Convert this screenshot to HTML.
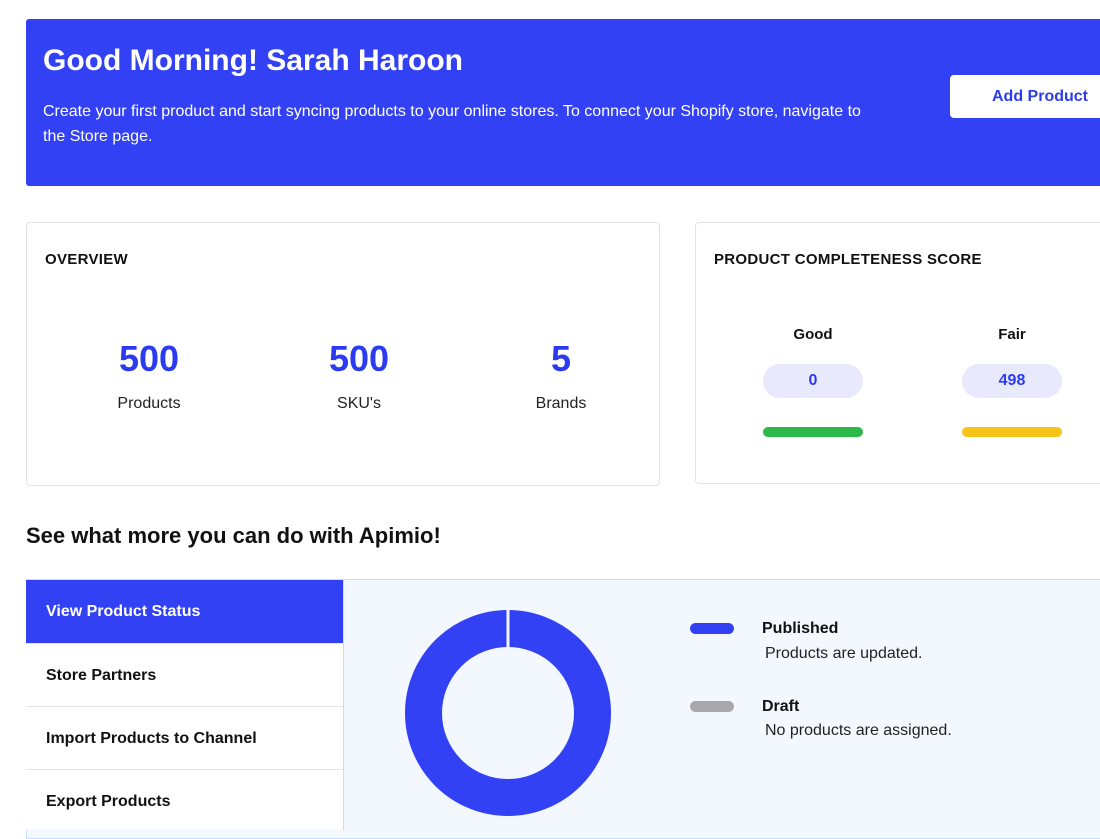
<!DOCTYPE html>
<html><head><style>
*{box-sizing:border-box;margin:0;padding:0}
body{width:1100px;height:825px;overflow:hidden;background:#fff;font-family:"Liberation Sans",sans-serif;position:relative;color:#111}
.abs{position:absolute}
.hero{left:26px;top:19px;width:1090px;height:167px;background:#3341f5;border-radius:3px}
.card{border:1px solid #e2e2ea;border-radius:4px;background:#fff}
.num{color:#2b3cf0;font-size:36px;font-weight:bold;text-align:center;width:160px}
.lbl{font-size:16px;text-align:center;width:160px;color:#222}
.pill{width:100px;height:34px;border-radius:17px;background:#e8e9fc;color:#2b3cf0;font-weight:bold;font-size:16px;text-align:center;line-height:34px}
.bar{width:100px;height:10px;border-radius:5px}
.tab{left:26px;width:317px;height:63px;border-bottom:1px solid #e3e3e8;font-size:16px;font-weight:bold;padding-left:20px;line-height:63px;background:#fff}
</style></head><body>
<div class="abs hero"></div>
<div class="abs" style="left:43px;top:44px;color:#fff;font-size:30px;font-weight:bold">Good Morning! Sarah Haroon</div>
<div class="abs" style="left:43px;top:99px;color:#fff;font-size:16px;line-height:25px;width:830px">Create your first product and start syncing products to your online stores. To connect your Shopify store, navigate to the Store page.</div>
<div class="abs" style="left:950px;top:75px;width:160px;height:43px;background:#fff;border-radius:4px;color:#2b3cf0;font-weight:bold;font-size:16px;line-height:43px;padding-left:42px">Add Product</div>

<div class="abs card" style="left:26px;top:222px;width:634px;height:264px"></div>
<div class="abs" style="left:45px;top:251px;font-size:15px;font-weight:bold;letter-spacing:0.3px">OVERVIEW</div>
<div class="abs num" style="left:69px;top:338px">500</div>
<div class="abs lbl" style="left:69px;top:395px">Products</div>
<div class="abs num" style="left:279px;top:338px">500</div>
<div class="abs lbl" style="left:279px;top:395px">SKU's</div>
<div class="abs num" style="left:481px;top:338px">5</div>
<div class="abs lbl" style="left:481px;top:395px">Brands</div>

<div class="abs card" style="left:695px;top:222px;width:420px;height:262px"></div>
<div class="abs" style="left:714px;top:251px;font-size:15px;font-weight:bold;letter-spacing:0.3px">PRODUCT COMPLETENESS SCORE</div>
<div class="abs" style="left:763px;top:326px;width:100px;text-align:center;font-weight:bold;font-size:15px">Good</div>
<div class="abs" style="left:962px;top:326px;width:100px;text-align:center;font-weight:bold;font-size:15px">Fair</div>
<div class="abs pill" style="left:763px;top:364px">0</div>
<div class="abs pill" style="left:962px;top:364px">498</div>
<div class="abs bar" style="left:763px;top:427px;background:#2db84a"></div>
<div class="abs bar" style="left:962px;top:427px;background:#f8c317"></div>

<div class="abs" style="left:26px;top:523px;font-size:22px;font-weight:bold">See what more you can do with Apimio!</div>

<div class="abs" style="left:26px;top:579px;width:1090px;height:260px;border:1px solid #c9dcf8;background:#f3f7fe"></div>
<div class="abs tab" style="top:580px;height:64px;background:#3341f5;color:#fff;line-height:64px">View Product Status</div>
<div class="abs tab" style="top:644px">Store Partners</div>
<div class="abs tab" style="top:707px">Import Products to Channel</div>
<div class="abs tab" style="top:770px;height:60px;border-bottom:none">Export Products</div>
<div class="abs" style="left:343px;top:580px;width:1px;height:250px;background:#c9dcf8"></div>

<svg class="abs" style="left:400px;top:605px" width="216" height="216">
<circle cx="108" cy="108" r="84.5" fill="none" stroke="#3341f5" stroke-width="37"/>
<rect x="106.5" y="0" width="3" height="45" fill="#f3f7fe"/>
</svg>

<div class="abs" style="left:690px;top:623px;width:44px;height:11px;border-radius:6px;background:#3341f5"></div>
<div class="abs" style="left:762px;top:620px;font-weight:bold;font-size:16px">Published</div>
<div class="abs" style="left:765px;top:645px;font-size:16px;color:#222">Products are updated.</div>
<div class="abs" style="left:690px;top:701px;width:44px;height:11px;border-radius:6px;background:#a8a8ad"></div>
<div class="abs" style="left:762px;top:698px;font-weight:bold;font-size:16px">Draft</div>
<div class="abs" style="left:765px;top:722px;font-size:16px;color:#222">No products are assigned.</div>
</body></html>
